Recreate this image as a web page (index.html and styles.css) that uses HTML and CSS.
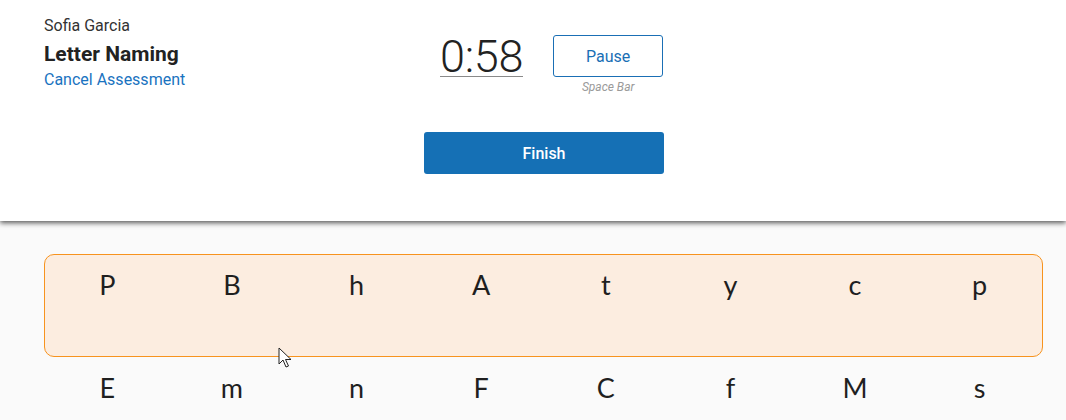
FILE: index.html
```html
<!DOCTYPE html>
<html lang="en">
<head>
<meta charset="utf-8">
<title>Letter Naming</title>
<link rel="stylesheet" href="styles.css">
</head>
<body>
<header class="header">
  <div class="info">
    <div class="student">Sofia Garcia</div>
    <div class="title">Letter Naming</div>
    <a class="cancel" href="#">Cancel Assessment</a>
  </div>
  <div class="controls">
    <div class="timer-row">
      <div class="timer">0:58</div>
      <div class="pause-wrap">
        <button class="pause">Pause</button>
        <div class="hint">Space Bar</div>
      </div>
    </div>
    <button class="finish">Finish</button>
  </div>
</header>
<main class="letters">
  <div class="row current">
    <span>P</span><span>B</span><span>h</span><span>A</span><span>t</span><span>y</span><span>c</span><span>p</span>
  </div>
  <div class="row next">
    <span>E</span><span>m</span><span>n</span><span>F</span><span>C</span><span>f</span><span>M</span><span>s</span>
  </div>
</main>
<svg class="cursor" width="14" height="22" viewBox="0 0 14 22"><path d="M1 1 L1 17 L5 13 L8 20 L10.5 19 L7.5 12.5 L13 12.5 Z" fill="#fff" stroke="#222" stroke-width="1" stroke-linejoin="round"/></svg>
</body>
</html>
```

FILE: styles.css
```css
html, body {
  margin: 0;
  padding: 0;
}
body {
  background: #fafafa;
  font-family: Roboto, "Liberation Sans", sans-serif;
  color: #222;
  width: 1066px;
  height: 420px;
  overflow: hidden;
  position: relative;
}
.header {
  background: #fff;
  height: 221px;
  box-sizing: border-box;
  display: flex;
  padding: 15px 0 0 44px;
  box-shadow: 0 2px 5px rgba(0, 0, 0, 0.65);
  position: relative;
}
.info {
  width: 380px;
  display: flex;
  flex-direction: column;
  align-items: flex-start;
  padding-top: 1px;
}
.student {
  font-size: 16px;
  line-height: 20px;
  color: #333;
}
.title {
  font-size: 21px;
  font-weight: 700;
  line-height: 26px;
  margin-top: 5px;
  color: #222;
}
.cancel {
  font-size: 16px;
  line-height: 20px;
  margin-top: 3px;
  color: #1a73c0;
  text-decoration: none;
}
.controls {
  width: 240px;
  display: flex;
  flex-direction: column;
}
.timer-row {
  display: flex;
  align-items: flex-start;
  padding-left: 16px;
  margin-top: 20px;
}
.timer {
  font-size: 45px;
  font-weight: 300;
  line-height: 46px;
  height: 42px;
  margin-top: -1px;
  color: #222;
  border-bottom: 1px solid #8a8a8a;
  letter-spacing: -0.3px;
}
.pause-wrap {
  margin-left: 30px;
  display: flex;
  flex-direction: column;
  align-items: center;
}
.pause {
  width: 110px;
  height: 42px;
  background: #fff;
  border: 1px solid #1a6fb5;
  border-radius: 3px;
  color: #1a6fb5;
  font-family: Roboto, "Liberation Sans", sans-serif;
  font-size: 16px;
  padding: 0;
}
.hint {
  font-size: 12px;
  font-style: italic;
  color: #9a9a9a;
  line-height: 14px;
  margin-top: 3px;
}
.finish {
  margin-top: 38px;
  width: 240px;
  height: 42px;
  background: #1570b5;
  border: none;
  border-radius: 3px;
  color: #fff;
  font-family: Roboto, "Liberation Sans", sans-serif;
  font-weight: 500;
  font-size: 16px;
  padding: 0;
}
.letters {
  margin: 33px 0 0 44px;
  width: 999px;
}
.row {
  display: grid;
  grid-template-columns: repeat(8, 1fr);
  box-sizing: border-box;
  padding-top: 14px;
  border: 1px solid transparent;
}
.row.current {
  height: 103px;
  background: #fcede0;
  border-color: #f7931e;
  border-radius: 10px;
}
.row span {
  text-align: center;
  font-family: Lato, "Noto Sans", sans-serif;
  font-size: 27px;
  line-height: 32px;
  color: #1f1f1f;
}
.cursor {
  position: absolute;
  left: 278px;
  top: 347px;
}
```
